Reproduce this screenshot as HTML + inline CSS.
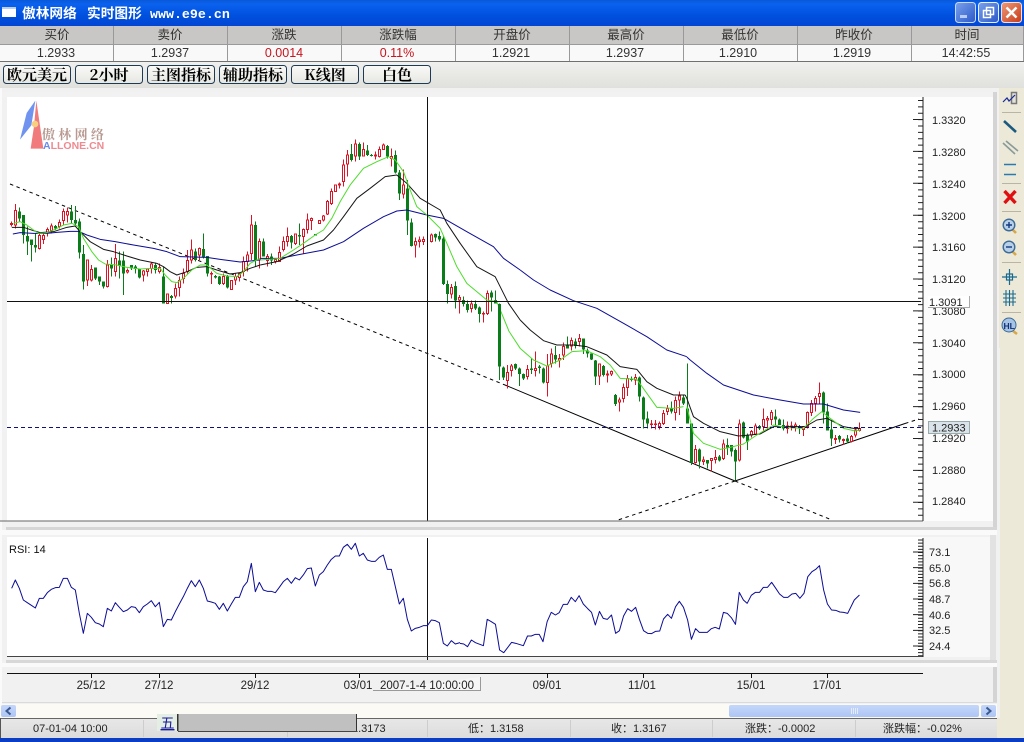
<!DOCTYPE html>
<html lang="zh"><head><meta charset="utf-8"><title>傲林网络 实时图形</title>
<style>
html,body{margin:0;padding:0;background:#ece9d8;width:1024px;height:742px;overflow:hidden}
svg{display:block}
text{font-family:"Liberation Sans","Noto Sans CJK SC",sans-serif}
.cn{font-family:"Liberation Sans","Noto Sans CJK SC",sans-serif;font-size:12.5px;fill:#333;text-anchor:middle}
.v{font-size:12.5px;fill:#333;text-anchor:middle}
.btn{font-family:"Noto Serif CJK SC","Noto Sans CJK SC",sans-serif;font-weight:700;font-size:15px;fill:#000;text-anchor:middle}
.ax{font-size:11px;fill:#222}
.dt{font-size:11.5px;fill:#222;text-anchor:middle}
.st{font-size:11px;fill:#222}
.gw,.rw{fill:none;stroke-width:3;shape-rendering:crispEdges}
.gw{stroke:#0a7c1a}.rw{stroke:#dc1426}
.gb{fill:none;stroke:#0a7c1a;stroke-width:9;shape-rendering:crispEdges}
.rb{fill:#fff;stroke:#dc1426;stroke-width:3;shape-rendering:crispEdges}
.mg,.mk,.mb{fill:none;stroke-width:3;stroke-linejoin:round}
.mg{stroke:#4ddd2a}.mk{stroke:#151515}.mb{stroke:#0c0c96}
</style></head><body>
<svg width="1024" height="742" viewBox="0 0 1024 742" xmlns="http://www.w3.org/2000/svg">
<defs>
<linearGradient id="tb" x1="0" y1="0" x2="0" y2="1"><stop offset="0" stop-color="#0a58d8"/><stop offset=".15" stop-color="#0a62ee"/><stop offset=".6" stop-color="#0050de"/><stop offset="1" stop-color="#0346d4"/></linearGradient>
<linearGradient id="bt" x1="0" y1="0" x2="0" y2="1"><stop offset="0" stop-color="#fafaf8"/><stop offset="1" stop-color="#e6e6e2"/></linearGradient>
<linearGradient id="tl" x1="0" y1="0" x2="0" y2="1"><stop offset="0" stop-color="#f0f0ee"/><stop offset="1" stop-color="#e0e0dc"/></linearGradient>
<linearGradient id="mn" x1="0" y1="0" x2="1" y2="1"><stop offset="0" stop-color="#7ba2ec"/><stop offset="1" stop-color="#2a58c8"/></linearGradient>
<linearGradient id="cl" x1="0" y1="0" x2="1" y2="1"><stop offset="0" stop-color="#ee9a78"/><stop offset="1" stop-color="#c83a18"/></linearGradient>
<linearGradient id="sb" x1="0" y1="0" x2="0" y2="1"><stop offset="0" stop-color="#c4d6fa"/><stop offset="1" stop-color="#aec6f4"/></linearGradient>
<linearGradient id="sts" x1="0" y1="0" x2="0" y2="1"><stop offset="0" stop-color="#e8e8e8"/><stop offset="1" stop-color="#dcdcdc"/></linearGradient>
</defs>

<rect width="1024" height="742" fill="#ece9d8"/>

<!-- title bar -->
<rect width="1024" height="26" fill="url(#tb)"/>
<rect x="2" y="7" width="14" height="10" fill="#fff"/><rect x="2" y="7" width="14" height="2" fill="#b8cff0"/>
<text x="22" y="18" font-size="13.7" font-weight="700" fill="#fff">傲林网络</text>
<text x="87" y="18" font-size="13.7" font-weight="700" fill="#fff">实时图形</text>
<text x="150" y="18" font-size="13.3" font-weight="700" fill="#fff" style="font-family:'Liberation Mono',monospace">www.e9e.cn</text>
<rect x="955.500" y="2.500" width="20" height="20" rx="3" fill="url(#mn)" stroke="#c8d8f8"/>
<rect x="960" y="15" width="7" height="3" fill="#b8ccf4"/>
<rect x="978.500" y="2.500" width="20" height="20" rx="3" fill="url(#mn)" stroke="#e8f0ff"/>
<path d="M986.500 7.500h7v7h-7zM983.500 10.500h7v7h-7z" fill="none" stroke="#fff" stroke-width="1.500"/>
<rect x="1001.500" y="2.500" width="20" height="20" rx="3" fill="url(#cl)" stroke="#f4e0d8"/>
<path d="M1006.500 7.500l10 10M1016.500 7.500l-10 10" stroke="#fff" stroke-width="2.500"/>

<!-- quote table -->
<rect y="26" width="1024" height="36" fill="#f9f9f9"/>
<rect y="26" width="1024" height="18" fill="#c9c7c5"/>
<rect y="44" width="1024" height="1" fill="#9a9a9a"/>
<rect y="61" width="1024" height="1" fill="#707070"/>
<path d="M113.500 26V61M227.500 26V61M341.500 26V61M455.500 26V61M569.500 26V61M683.500 26V61M797.500 26V61M911.500 26V61M1023.500 26V61" stroke="#999" shape-rendering="crispEdges"/>
<text class="cn" x="57" y="39">买价</text><text class="cn" x="170" y="39">卖价</text><text class="cn" x="284" y="39">涨跌</text><text class="cn" x="398" y="39">涨跌幅</text><text class="cn" x="512" y="39">开盘价</text><text class="cn" x="626" y="39">最高价</text><text class="cn" x="740" y="39">最低价</text><text class="cn" x="854" y="39">昨收价</text><text class="cn" x="967" y="39">时间</text>
<text class="v" x="56" y="57">1.2933</text><text class="v" x="170" y="57">1.2937</text><text class="v" x="284" y="57" style="fill:#c8141e">0.0014</text><text class="v" x="397" y="57" style="fill:#c8141e">0.11%</text><text class="v" x="511" y="57">1.2921</text><text class="v" x="625" y="57">1.2937</text><text class="v" x="738" y="57">1.2910</text><text class="v" x="852" y="57">1.2919</text><text class="v" x="966" y="57">14:42:55</text>

<!-- toolbar -->
<rect y="62" width="1024" height="26" fill="url(#tl)"/>
<g fill="url(#bt)" stroke="#1d3c54">
<rect x="3.500" y="65.500" width="67" height="18" rx="3"/><rect x="75.500" y="65.500" width="67" height="18" rx="3"/><rect x="147.500" y="65.500" width="67" height="18" rx="3"/><rect x="219.500" y="65.500" width="67" height="18" rx="3"/><rect x="291.500" y="65.500" width="67" height="18" rx="3"/><rect x="363.500" y="65.500" width="67" height="18" rx="3"/>
</g>
<text class="btn" x="37" y="80">欧元美元</text><text class="btn" x="109" y="80">2小时</text><text class="btn" x="181" y="80">主图指标</text><text class="btn" x="253" y="80">辅助指标</text><text class="btn" x="325" y="80">K线图</text><text class="btn" x="397" y="80">白色</text>

<!-- panel frames -->
<rect y="88" width="1000" height="630" fill="#f1f1f1"/>
<rect x="0" y="88" width="2" height="630" fill="#fafafa"/>
<rect x="2" y="92" width="991" height="5" fill="#f2f2f2"/>
<rect x="7" y="97" width="986" height="424" fill="#fff"/>
<rect x="923" y="97" width="70" height="424" fill="#fcfcfc"/>
<rect x="993" y="92" width="4" height="437" fill="#d4d4d4"/>
<rect x="6" y="527" width="991" height="3" fill="#d6d6d6"/>
<rect x="2" y="530" width="995" height="5" fill="#fafafa"/>
<rect x="7" y="537" width="916" height="120" fill="#fff"/>
<rect x="923" y="537" width="67" height="120" fill="#f8f8f8"/>
<rect x="990" y="535" width="6" height="125" fill="#e2e2e2"/>
<rect x="6" y="660" width="991" height="3" fill="#d8d8d8"/>
<rect x="2" y="663" width="995" height="4" fill="#fafafa"/>
<rect x="993" y="667" width="4" height="35" fill="#d4d4d4"/>
<rect x="2" y="702" width="995" height="1" fill="#dadada"/>

<!-- logo -->
<g transform="translate(10 98) scale(.33333)">
<path d="M76 8L50 45L30 125L64 82Z" fill="#6f93ee"/>
<path d="M79 8L100 152H62L72 85Z" fill="#f07a7c"/>
<circle cx="75" cy="78" r="10" fill="#f7cf80"/>
</g>
<text x="42" y="139" font-size="13" fill="#b89a92" letter-spacing="3.300" font-weight="700" style="font-family:'Noto Serif CJK SC',serif">傲林网络</text>
<text x="43" y="149" font-size="10.500" font-weight="700" fill="#ee8a90"><tspan fill="#6a8ce8">A</tspan>LLONE.CN</text>

<!-- trend lines -->
<g fill="none" stroke="#000">
<path d="M10 184L505 385" stroke-dasharray="3.500 3.500"/>
<path d="M505 385L735 481M735 481L905 423.500"/>
<path d="M735 481L832 520M735 481L618 520" stroke-dasharray="3.500 3.500"/>
<path d="M905 423.500L919 419" stroke-dasharray="3.500 3.500"/>
</g>

<!-- candles: segment A -->
<g transform="translate(.167 170) scale(.33333)">
<path class="gw" d="M58 112V155M70 135V220M82 170V255M94 208V275M106 190V248M166 165V180M214 105V162M226 108V165M238 145V265M250 225V358M286 293V330M298 320V345M310 335V355M334 262V320M358 245V325M370 245V375M394 285V300M406 285V310M418 295V325M466 278V310M490 290V400M514 375V400M586 235V275M610 190V265M622 258V320M646 315V325M658 318V345M682 315V355M766 155V290"/>
<path class="gb" d="M58 125V145M70 135V195M82 198V215M94 208V225M106 225V232M166 168V176M214 125V150M226 150V160M238 155V248M250 252V335M286 293V325M298 320V335M310 335V350M334 285V295M358 272V288M370 272V310M394 285V295M406 290V297M418 295V322M466 285V300M490 320V400M514 378V384M586 245V270M610 237V262M622 258V310M646 318V323M658 320V342M682 320V352M766 165V270"/>
<path class="rw" d="M34 155V170M46 102V175M118 190V238M130 190V222M142 172V200M154 160V190M178 148V175M190 115V165M202 113V158M262 270V348M274 285V335M322 270V352M346 222V320M382 295V310M430 300V335M442 295V320M454 278V310M478 280V310M502 372V400M526 340V385M538 320V380M550 295V340M562 240V310M574 208V280M598 232V270M634 305V342M670 310V345M694 330V360M706 310V345M718 310V335M730 260V320M742 245V305M754 135V270M778 205V295"/>
<path class="rb" d="M31 160h6V163h-6zM43 122h6V165h-6zM115 197h6V235h-6zM127 197h6V208h-6zM139 178h6V187h-6zM151 168h6V182h-6zM175 158h6V170h-6zM187 125h6V152h-6zM199 125h6V135h-6zM259 270h6V330h-6zM271 298h6V330h-6zM319 285h6V350h-6zM343 265h6V305h-6zM379 302h6V306h-6zM427 303h6V315h-6zM439 297h6V305h-6zM451 282h6V296h-6zM475 292h6V305h-6zM499 372h6V400h-6zM523 355h6V378h-6zM535 332h6V352h-6zM547 310h6V325h-6zM559 272h6V305h-6zM571 240h6V270h-6zM595 235h6V255h-6zM631 310h6V312h-6zM667 320h6V340h-6zM691 332h6V358h-6zM703 320h6V330h-6zM715 310h6V322h-6zM727 275h6V305h-6zM739 255h6V275h-6zM751 165h6V250h-6zM775 215h6V270h-6z"/>
<path class="mb" d="M38 192L60 188L100 190L140 190L170 187L210 184L235 184L260 195L300 208L345 215L400 225L460 235L500 245L540 260L620 262L660 268L720 276L780 270"/>
<path class="mk" d="M35 172L70 172L100 182L120 188L160 185L200 172L225 168L240 185L270 215L310 238L340 245L380 258L420 270L470 280L490 290L510 305L530 315L560 305L590 292L620 290L650 300L690 312L720 308L750 295L780 285"/>
<path class="mg" d="M40 160L60 155L80 165L100 180L115 190L140 188L165 178L190 165L215 160L235 170L250 205L275 245L295 270L315 282L350 285L380 292L420 297L450 295L480 295L495 315L515 335L530 338L550 325L575 300L600 285L620 285L650 310L680 318L710 320L730 305L750 280L780 265"/>
</g>

<!-- segment B -->
<g transform="translate(260.167 130) scale(.33333)">
<path class="gw" d="M10 325V380M34 370V405M94 315V355M118 280V345M274 42V95M298 38V90M322 45V78M334 72V80M382 45V85M406 62V130M418 120V210M442 150V315M454 265V350M526 310V335M538 305V335M550 320V465M562 452V520M586 455V535M610 500V530M622 512V548M646 512V540M658 530V578M694 482V545M706 482V520"/>
<path class="gb" d="M10 335V380M34 380V392M94 318V338M118 315V320M166 312V316M274 72V90M298 42V80M322 62V75M334 75V78M382 48V80M406 75V128M418 128V190M442 175V272M454 278V348M526 312V322M538 318V328M550 325V462M562 462V492M586 468V512M610 510V522M622 522V540M646 522V535M658 532V552M694 488V502M706 510V520"/>
<path class="rw" d="M22 372V410M46 385V400M58 350V395M70 320V365M82 292V350M106 310V345M130 295V370M142 250V310M154 263V300M178 270V282M190 255V275M202 210V255M214 175V225M226 165V185M238 158V175M250 88V170M262 60V140M286 28V95M310 38V80M346 65V88M358 50V82M370 40V60M394 55V110M430 118V205M466 322V382M478 320V352M490 320V345M514 310V338M574 462V505M598 495V550M634 512V548M670 545V578M682 482V555"/>
<path class="rb" d="M19 380h6V392h-6zM43 388h6V394h-6zM55 368h6V395h-6zM67 335h6V358h-6zM79 320h6V335h-6zM103 312h6V340h-6zM127 298h6V320h-6zM139 270h6V298h-6zM151 265h6V272h-6zM175 272h6V280h-6zM187 258h6V270h-6zM199 215h6V252h-6zM211 185h6V220h-6zM223 165h6V185h-6zM235 162h6V165h-6zM247 105h6V155h-6zM259 75h6V102h-6zM283 42h6V78h-6zM307 58h6V78h-6zM343 75h6V78h-6zM355 58h6V80h-6zM367 45h6V58h-6zM391 80h6V85h-6zM427 165h6V192h-6zM463 335h6V345h-6zM475 330h6V335h-6zM487 328h6V334h-6zM511 315h6V335h-6zM571 472h6V492h-6zM595 502h6V510h-6zM631 522h6V535h-6zM667 550h6V552h-6zM679 490h6V550h-6z"/>
<path class="mb" d="M0 385L60 385L110 375L190 360L250 335L310 295L370 260L410 243L440 240L500 255L550 265L620 305L700 350L730 385L780 420"/>
<path class="mk" d="M0 405L50 395L100 372L140 348L190 330L220 300L250 260L290 205L330 175L375 140L410 135L440 160L480 205L540 240L560 280L600 340L650 410L705 440L745 520L780 570"/>
<path class="mg" d="M0 390L60 385L100 360L130 340L165 315L190 300L215 265L240 215L270 165L310 115L350 95L385 80L405 90L430 125L450 180L470 230L500 255L540 295L560 340L590 410L620 460L680 510L710 515L745 600"/>
</g>

<!-- segment C -->
<g transform="translate(440.167 280) scale(.33333)">
<path class="gw" d="M178 70V300M190 260V300M226 250V270M238 262V318M250 280V300M274 235V282M298 255V280M310 262V310M346 198V250M382 170V205M406 175V205M430 175V222M442 205V232M454 220V240M466 240V315M490 255V290M526 342V378M574 290V305M598 290V365M610 350V445M622 395V445M694 365V400M730 345V375M742 250V430M754 430V555"/>
<path class="gb" d="M178 72V260M190 262V292M226 252V265M238 265V282M250 282V296M274 265V270M298 260V264M310 265V308M346 225V238M382 195V205M406 185V198M430 175V208M442 212V220M454 220V238M466 242V290M490 258V285M526 345V372M574 295V300M598 292V350M610 352V418M622 415V430M694 385V395M730 352V370M742 385V430M754 430V548"/>
<path class="rw" d="M202 255V325M214 252V290M262 255V298M286 215V290M322 222V350M334 205V262M358 222V262M370 188V240M394 172V212M418 162V200M478 252V315M502 272V308M514 272V288M538 352V395M550 310V368M562 285V348M586 282V315M634 420V445M646 420V448M658 425V448M670 390V435M682 375V405M706 350V422M718 335V405"/>
<path class="rb" d="M199 278h6V302h-6zM211 258h6V272h-6zM259 268h6V290h-6zM283 265h6V272h-6zM319 258h6V308h-6zM331 222h6V250h-6zM355 235h6V240h-6zM367 200h6V225h-6zM391 182h6V198h-6zM415 175h6V185h-6zM475 252h6V288h-6zM499 282h6V285h-6zM511 275h6V282h-6zM535 360h6V366h-6zM547 322h6V355h-6zM559 295h6V322h-6zM583 292h6V300h-6zM631 432h6V434h-6zM643 432h6V434h-6zM655 430h6V440h-6zM667 400h6V430h-6zM679 385h6V395h-6zM703 362h6V398h-6zM715 348h6V360h-6z"/>
<path class="mb" d="M240 -30L280 0L330 30L400 62L470 85L550 130L620 170L680 210L740 230"/>
<path class="mk" d="M240 120L270 150L310 182L350 195L400 195L440 200L500 225L540 260L590 268L620 305L650 325L700 345L735 345"/>
<path class="mg" d="M204 150L240 205L280 240L320 258L360 240L395 215L440 212L480 230L510 255L540 295L590 298L620 340L650 382L700 385L730 380"/>
</g>

<!-- segment D -->
<g transform="translate(680.167 360) scale(.33333)">
<path class="gw" d="M58 265V325M82 300V325M118 285V305M142 235V285M154 255V290M166 265V362M190 185V235M202 220V270M238 195V210M286 148V198M298 175V195M310 178V212M358 195V222M430 95V190M442 130V212M454 180V258M478 225V248M502 225V250"/>
<path class="gb" d="M58 268V305M82 300V310M118 290V302M142 255V262M154 255V275M166 270V305M190 188V232M202 225V245M238 198V205M286 170V178M298 178V195M310 195V205M358 198V205M430 98V158M442 155V212M454 208V235M478 228V238M502 235V245"/>
<path class="rw" d="M46 255V310M70 290V315M94 295V335M106 270V310M130 238V300M178 178V305M214 210V232M226 190V225M250 145V212M262 168V210M274 150V195M322 185V220M334 185V212M346 188V215M370 198V228M382 155V205M394 120V168M406 108V155M418 68V130M466 225V252M490 235V255M514 225V248M526 205V232M538 188V215"/>
<path class="rb" d="M43 268h6V308h-6zM67 300h6V305h-6zM91 295h6V302h-6zM103 292h6V298h-6zM127 252h6V295h-6zM175 192h6V300h-6zM211 215h6V225h-6zM223 198h6V222h-6zM247 178h6V200h-6zM259 175h6V180h-6zM271 158h6V178h-6zM319 198h6V205h-6zM331 198h6V203h-6zM343 195h6V200h-6zM367 200h6V208h-6zM379 158h6V200h-6zM391 130h6V158h-6zM403 115h6V130h-6zM415 100h6V110h-6zM463 235h6V239h-6zM487 238h6V241h-6zM511 230h6V245h-6zM523 210h6V225h-6zM535 205h6V212h-6z"/>
<path class="mb" d="M20 -9L30 0L80 40L130 75L220 105L300 120L370 132L430 132L490 150L540 157"/>
<path class="mk" d="M15 105L20 115L40 170L70 190L120 215L175 228L240 222L280 200L320 200L375 200L410 180L440 175L490 200L520 205L540 205"/>
<path class="mg" d="M20 140L40 220L70 250L120 268L150 262L190 252L230 225L280 195L320 203L370 205L400 175L425 155L450 175L490 205L525 213L540 210"/>
</g>

<!-- crosshair / levels -->
<path d="M7 301.500H921M427.500 97V521M427.500 538V660" stroke="#111" fill="none" shape-rendering="crispEdges"/>
<path d="M7 427.500H921" stroke="#10107a" stroke-dasharray="4 3" fill="none" shape-rendering="crispEdges"/>
<path d="M0 521H923" stroke="#666" stroke-width="1" shape-rendering="crispEdges"/>

<!-- price axis -->
<path d="M923 97V521" stroke="#222" stroke-width="1" shape-rendering="crispEdges"/>
<path d="M920.500 100V521" stroke="#222" stroke-width="5" stroke-dasharray="1 5.380" fill="none"/>
<path d="M918 119V521" stroke="#222" stroke-width="10" stroke-dasharray="1 30.900" fill="none"/>
<text class="ax" x="932" y="124">1.3320</text><text class="ax" x="932" y="156">1.3280</text><text class="ax" x="932" y="188">1.3240</text><text class="ax" x="932" y="220">1.3200</text><text class="ax" x="932" y="251">1.3160</text><text class="ax" x="932" y="283">1.3120</text><text class="ax" x="932" y="315">1.3080</text><text class="ax" x="932" y="347">1.3040</text><text class="ax" x="932" y="378">1.3000</text><text class="ax" x="932" y="410">1.2960</text><text class="ax" x="932" y="442">1.2920</text><text class="ax" x="932" y="474">1.2880</text><text class="ax" x="932" y="505">1.2840</text>
<rect x="928" y="296" width="41" height="11" fill="#fff"/>
<path d="M928 307.500H969.500V296" fill="none" stroke="#aaa"/>
<text class="ax" x="929" y="306">1.3091</text>
<rect x="928.500" y="421.500" width="41" height="12" fill="#dbe3ea" stroke="#9aa"/>
<text class="ax" x="932" y="431.500">1.2933</text>

<!-- RSI -->
<text x="9" y="553" font-size="11" fill="#111">RSI: 14</text>
<g transform="translate(0 530) scale(.33333)"><path class="mb" d="M35 175L46 150L58 175L70 210L82 218L94 226L106 234L118 205L130 205L142 188L154 178L166 173L178 172L190 145L202 145L214 172L226 180L238 250L250 310L262 250L274 262L286 278L298 282L310 290L322 235L334 243L346 218L358 232L370 245L382 240L394 230L406 232L418 248L430 230L442 222L454 212L466 230L478 217L490 290L502 268L514 270L526 245L538 222L550 200L562 175L574 152L586 170L598 150L610 175L622 213L634 216L646 220L658 238L670 220L682 243L694 222L706 202L718 202L730 170L742 155L754 100L766 185L778 157L790 180L802 184L814 184L826 188L838 172L850 155L862 145L874 160L886 143L898 150L910 135L922 116L934 114L946 168L958 135L970 125L982 105L994 88L1006 78L1018 78L1030 52L1042 43L1054 58L1066 40L1078 78L1090 70L1102 90L1114 94L1126 94L1138 82L1150 75L1162 118L1174 118L1186 170L1198 222L1210 205L1222 268L1234 303L1246 295L1258 292L1270 287L1282 287L1294 270L1306 272L1318 278L1330 340L1342 348L1354 332L1366 342L1380 338"/></g>
<g transform="translate(460 530) scale(.34435 .33333)"><path fill="none" stroke="#0c0c96" stroke-width="1" vector-effect="non-scaling-stroke" stroke-linejoin="round" d="M0 340L11 342L22 350L33 330L45 338L68 347L79 268L91 275L103 283L115 360L127 368L150 337L162 340L184 347L196 318L207 318L219 313L230 313L241 335L253 275L265 247L277 255L288 248L300 223L312 223L323 202L335 215L346 197L358 222L370 235L382 247L393 285L405 244L416 265L428 268L440 255L452 310L463 302L475 258L487 236L498 244L510 232L521 268L533 302L545 310L556 311L568 304L580 303L591 267L603 253L614 265L626 230L637 214L649 232L661 270L672 328L684 296L695 307L718 307L730 296L741 292L753 297L765 247L776 250L788 263L800 283L811 187L823 210L834 220L846 196L858 187L870 187L881 172L893 172L905 157L917 175L928 192L940 202L952 202L964 192L975 190L987 205L999 190L1010 140L1022 125L1033 118L1044 107L1056 180L1067 222L1079 240L1091 241L1103 246L1114 247L1126 250L1145 210L1160 195"/></g>
<path d="M7 656.500H923" stroke="#444" shape-rendering="crispEdges"/>
<path d="M923 538V657" stroke="#222" stroke-width="1" shape-rendering="crispEdges"/>
<path d="M920.500 539.500V656" stroke="#222" stroke-width="5" stroke-dasharray="1 2.130" fill="none"/>
<path d="M918 551.500V656" stroke="#222" stroke-width="10" stroke-dasharray="1 14.670" fill="none"/>
<text class="ax" x="929" y="556">73.1</text><text class="ax" x="929" y="572">65.0</text><text class="ax" x="929" y="587">56.8</text><text class="ax" x="929" y="603">48.7</text><text class="ax" x="929" y="619">40.6</text><text class="ax" x="929" y="634">32.5</text><text class="ax" x="929" y="650">24.4</text>

<!-- time axis -->
<path d="M7 673.500H923M91.500 673V678M159.500 673V678M255.500 673V678M359.500 673V678M547.500 673V678M643.500 673V678M751.500 673V678M827.500 673V678" stroke="#111" fill="none" shape-rendering="crispEdges"/>
<text class="dt" x="91" y="689">25/12</text><text class="dt" x="159" y="689">27/12</text><text class="dt" x="255" y="689">29/12</text><text class="dt" x="358" y="689">03/01</text><text class="dt" x="547" y="689">09/01</text><text class="dt" x="642" y="689">11/01</text><text class="dt" x="751" y="689">15/01</text><text class="dt" x="827" y="689">17/01</text>
<path d="M373 690.500H480.500V677" fill="#f6f6f6" stroke="#999"/>
<text class="dt" x="427" y="689">2007-1-4 10:00:00</text>

<!-- scrollbar -->
<rect y="704" width="997" height="14" fill="#fbfaf5"/>
<rect x="1" y="705" width="15" height="12" rx="2" fill="url(#sb)"/>
<path d="M10.500 707.500L6.500 711L10.500 714.500" fill="none" stroke="#3a5a90" stroke-width="2"/>
<rect x="729" y="705" width="250" height="12" rx="2" fill="url(#sb)"/>
<path d="M851.500 708V714M853.500 708V714M855.500 708V714M857.500 708V714" stroke="#e4ecfc" shape-rendering="crispEdges"/>
<rect x="981" y="705" width="15" height="12" rx="2" fill="url(#sb)"/>
<path d="M986.500 707.500L990.500 711L986.500 714.500" fill="none" stroke="#3a5a90" stroke-width="2"/>

<!-- status bar -->
<rect y="718" width="997" height="20" fill="url(#sts)"/>
<rect y="718" width="997" height="1" fill="#666"/>
<rect y="718" width="1" height="20" fill="#555"/>
<path d="M143.500 720V737M287.500 720V737M427.500 720V737M570.500 720V737M712.500 720V737M855.500 720V737" stroke="#cdcdcd" shape-rendering="crispEdges"/>
<text class="st" x="33" y="732">07-01-04 10:00</text>
<text class="st" x="352" y="732">1.3173</text>
<text class="st" x="468" y="732">低：1.3158</text>
<text class="st" x="611" y="732">收：1.3167</text>
<text class="st" x="745" y="732">涨跌：-0.0002</text>
<text class="st" x="883" y="732">涨跌幅：-0.02%</text>
<rect y="738" width="1024" height="4" fill="#0a3cc4"/>

<!-- overlay -->
<rect x="157" y="714" width="21" height="17" fill="#e4eee4"/>
<text x="160.500" y="728" font-size="14" fill="#1a1a9a" text-decoration="underline" style="font-family:'Noto Sans CJK SC',sans-serif">五</text>
<rect x="177" y="714" width="1.500" height="17" fill="#333"/>
<rect x="178.500" y="714" width="178" height="17" fill="#c0c0c0"/>
<rect x="356" y="714" width="1" height="17" fill="#333"/>
<rect x="178" y="731" width="179" height="1" fill="#444"/>

<!-- right toolbar -->
<rect x="999" y="88" width="25" height="260" fill="#ece9d8"/>
<path d="M1002 112.500H1021M1002 183.500H1021M1002 211.500H1021M1002 262.500H1021M1002 312.500H1021" stroke="#b8b5a5" shape-rendering="crispEdges"/>
<rect x="1011.500" y="92.500" width="5" height="11" fill="#e4e2d8" stroke="#777" stroke-width="1.500"/>
<path d="M1003 102L1007 98L1009 101L1015 95" fill="none" stroke="#1a2a9a" stroke-width="1.200"/>
<path d="M1004 121L1016 132" stroke="#1a5a80" stroke-width="2.600"/>
<path d="M1003 143L1015 154M1006 141L1018 151" stroke="#8a9a98" stroke-width="1.600"/>
<path d="M1004 164.500H1016M1004 174.500H1016" stroke="#2a7ab0" stroke-width="1.500"/>
<path d="M1004.500 191L1015.500 203M1015.500 191L1004.500 203" stroke="#e01010" stroke-width="3.400"/>
<path d="M1012.500 229.500L1016 233" stroke="#d8a848" stroke-width="2.600"/>
<circle cx="1009" cy="225" r="5.800" fill="#b8d0e8" stroke="#3a6a98" stroke-width="1.400"/>
<path d="M1006 225H1012M1009 222V228" stroke="#123a80" stroke-width="1.400"/>
<path d="M1012.500 251.500L1016 255" stroke="#d8a848" stroke-width="2.600"/>
<circle cx="1009" cy="247" r="5.800" fill="#b8d0e8" stroke="#3a6a98" stroke-width="1.400"/>
<path d="M1006 247H1012" stroke="#123a80" stroke-width="1.400"/>
<path d="M1002 277H1017M1009.500 269V285" stroke="#1a6a90" stroke-width="1.200"/>
<rect x="1006.500" y="274" width="6" height="6" fill="none" stroke="#1a6a90" stroke-width="1.200"/>
<path d="M1003 294H1016M1003 298H1016M1003 302H1016M1006 290V306M1009.500 290V306M1013 290V306" stroke="#1a6a90" stroke-width="1.100"/>
<path d="M1013 331L1017 334" stroke="#d8a848" stroke-width="2.600"/>
<circle cx="1009" cy="325" r="7" fill="#a8c4e4" stroke="#3a6a98"/>
<text x="1003.500" y="329" font-size="8.500" font-weight="700" fill="#10307a">HL</text>
</svg>
</body></html>
